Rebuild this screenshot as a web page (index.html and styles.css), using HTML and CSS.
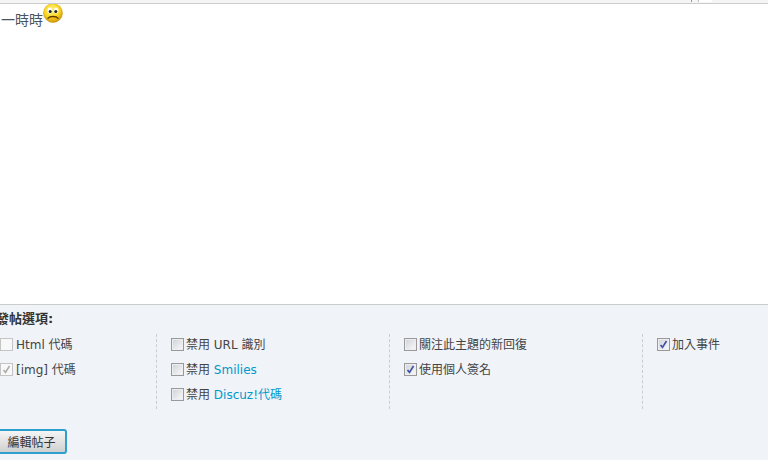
FILE: index.html
```html
<!DOCTYPE html>
<html lang="zh-Hant">
<head>
<meta charset="utf-8">
<title>編輯帖子</title>
<link rel="stylesheet" href="styles.css">
</head>
<body>
<div class="topbar"><span class="tick t1"></span><span class="tick t2"></span></div>
<div class="editor">一時時<svg class="smiley" width="20" height="20" viewBox="0 0 20 20"><defs><radialGradient id="sm" cx="45%" cy="35%" r="65%"><stop offset="0" stop-color="#fff58a"/><stop offset=".6" stop-color="#fdd820"/><stop offset="1" stop-color="#d09408"/></radialGradient></defs><circle cx="10" cy="10" r="9.5" fill="url(#sm)" stroke="#c09515" stroke-width=".5"/><ellipse cx="6.8" cy="7.6" rx="2.2" ry="3" fill="#fff"/><ellipse cx="13.2" cy="7.6" rx="2.2" ry="3" fill="#fff"/><circle cx="7.2" cy="8.6" r="1.5" fill="#222"/><circle cx="12.8" cy="8.6" r="1.5" fill="#222"/><path d="M4.5 15.6C7 12.6 13 12.6 15.5 15.6" fill="#e8a810" stroke="#5b3d05" stroke-width="1.2"/></svg></div>
<div class="panel">
  <div class="title">發帖選項:</div>
  <div class="options">
    <div class="col c1">
      <div class="row"><span class="box"></span>Html 代碼</div>
      <div class="row"><span class="box"><svg class="check" width="9" height="9" viewBox="0 0 9 9"><path d="M1.5 5l2 2.4L7.5 1" fill="none" stroke="#aaa" stroke-width="1.5"/></svg></span>[img] 代碼</div>
    </div>
    <div class="col c2">
      <div class="row"><span class="box grad"></span>禁用 URL 識別</div>
      <div class="row"><span class="box grad"></span><span>禁用 <a class="link">Smilies</a></span></div>
      <div class="row"><span class="box grad"></span><span>禁用 <a class="link">Discuz!代碼</a></span></div>
    </div>
    <div class="col c3">
      <div class="row"><span class="box grad"></span>關注此主題的新回復</div>
      <div class="row"><span class="box grad"><svg class="check" width="9" height="9" viewBox="0 0 9 9"><path d="M1.5 5l2 2.4L7.5 1" fill="none" stroke="#3f51a8" stroke-width="1.7"/></svg></span>使用個人簽名</div>
    </div>
    <div class="col c4">
      <div class="row"><span class="box grad"><svg class="check" width="9" height="9" viewBox="0 0 9 9"><path d="M1.5 5l2 2.4L7.5 1" fill="none" stroke="#3f51a8" stroke-width="1.7"/></svg></span>加入事件</div>
    </div>
  </div>
  <button class="submit" type="button">編輯帖子</button>
</div>
</body>
</html>
```
FILE: styles.css
```css
html, body { margin: 0; padding: 0; height: 460px; overflow: hidden; background: #fff; }
body {
  width: 768px;
  font-family: "DejaVu Sans", "Noto Sans CJK TC", sans-serif;
  font-size: 12px;
  color: #444;
}
.topbar {
  position: relative;
  height: 3px;
  background: #f5f5f5;
  border-bottom: 1px solid #ccc;
}
.tick { position: absolute; top: 0; height: 2px; width: 1px; background: #999; }
.t1 { left: 691px; }
.t2 { left: 698px; width: 13px; background: #fff; border-left: 1px solid #bbb; }
.editor {
  height: 300px;
  box-sizing: border-box;
  padding-left: 1px;
  padding-top: 5px;
  font-size: 14px;
  line-height: 20px;
  color: #4a5560;
}
.smiley { vertical-align: 2px; margin-top: -6px; }
.panel {
  height: 155px;
  background: #f0f3f8;
  border-top: 1px solid #ccc;
  overflow: hidden;
}
.title {
  margin: 6px 0 0 -4px;
  height: 16px;
  line-height: 16px;
  font-size: 13px;
  font-weight: 700;
  color: #333;
}
.options { display: flex; margin-top: 7px; height: 75px; }
.col { box-sizing: border-box; height: 75px; padding-left: 14px; border-left: 1px dashed #ccc; }
.c1 { width: 156px; padding-left: 0; border-left: 0; }
.c2 { width: 233px; }
.c3 { width: 253px; }
.c4 { flex: 1; }
.row { display: flex; align-items: flex-start; height: 25px; line-height: 23px; white-space: pre; }
.box {
  box-sizing: border-box;
  display: flex;
  align-items: center;
  justify-content: center;
  width: 13px;
  height: 13px;
  margin: 4px 2px 0 0;
  border: 1px solid #999;
  flex: none;
}
.box.grad { background: linear-gradient(135deg, #cfd1d6, #fbfbfb); box-shadow: inset 0 0 0 1px #eceef2; }
.c1 .box { margin-right: 3px; border-color: #c4c4c4; background: #f8f8f8; }
.link { color: #09c; }
.submit {
  display: block;
  box-sizing: border-box;
  margin: 20px 0 0 -10px;
  width: 77px;
  height: 25px;
  padding: 0 0 0 6px;
  font: inherit;
  color: #333;
  border: 2px solid #2f9fd0;
  border-radius: 3px;
  background: linear-gradient(#f5f5f5, #d0d0d0);
}
```
